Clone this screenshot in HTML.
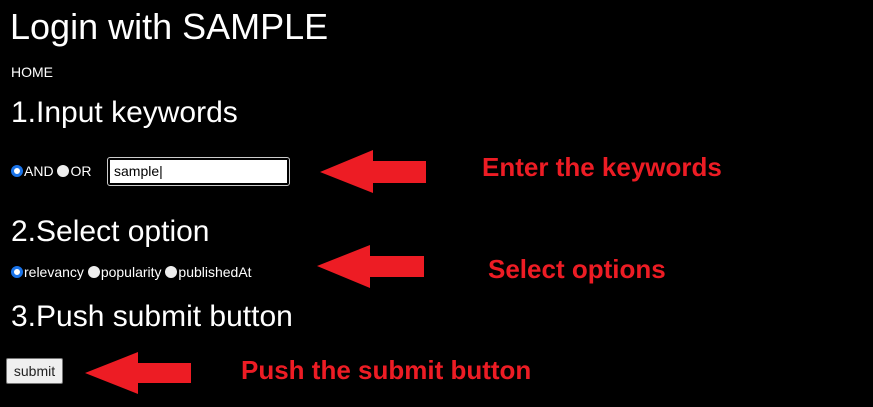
<!DOCTYPE html>
<html><head><style>
body{margin:0;width:873px;height:407px;background:#000;color:#fff;font-family:"Liberation Sans",sans-serif;position:relative;overflow:hidden}
.a{position:absolute;white-space:nowrap}
.r{color:#ed1c24;font-weight:bold;font-size:26px}
.rad{display:inline-block;width:12px;height:12px;border-radius:50%;background:#eee;vertical-align:-1px;margin-right:1px;box-sizing:border-box}
.on{background:#fff;border:3px solid #1a73e8}
</style></head><body>
<div class="a" style="left:10px;top:6px;font-size:36px">Login with SAMPLE</div>
<div class="a" style="left:11px;top:64px;font-size:14px">HOME</div>
<div class="a" style="left:11px;top:96px;font-size:30px">1.Input keywords</div>
<div class="a" style="left:11px;top:163px;font-size:14px"><span class="rad on"></span>AND <span class="rad"></span>OR</div>
<div class="a" style="left:108px;top:158px;width:181px;height:27px;background:#fff;border:2px solid #000;outline:1px solid #ccc;border-radius:2px;color:#000;font-size:14px;line-height:23px;padding-left:4px;box-sizing:border-box">sample|</div>
<div class="a" style="left:11px;top:215px;font-size:30px">2.Select option</div>
<div class="a" style="left:11px;top:264px;font-size:14px"><span class="rad on"></span>relevancy <span class="rad"></span>popularity <span class="rad"></span>publishedAt</div>
<div class="a" style="left:11px;top:300px;font-size:30px">3.Push submit button</div>
<div class="a" style="left:6px;top:358px;width:57px;height:26px;background:#efefef;border:1px solid #767676;border-radius:2px;color:#222;font-size:14px;text-align:center;line-height:24px;box-sizing:border-box">submit</div>
<svg class="a" style="left:0;top:0" width="873" height="407">
<polygon fill="#ed1c24" points="320,172 373,150 373,161 426,161 426,183 373,183 373,193"/>
<polygon fill="#ed1c24" points="317,266 370,245 370,256 424,256 424,277 370,277 370,288"/>
<polygon fill="#ed1c24" points="85,373 138,352 138,363 191,363 191,383 138,383 138,394"/>
</svg>
<div class="a r" style="left:482px;top:152px">Enter the keywords</div>
<div class="a r" style="left:488px;top:254px">Select options</div>
<div class="a r" style="left:241px;top:355px">Push the submit button</div>
</body></html>
